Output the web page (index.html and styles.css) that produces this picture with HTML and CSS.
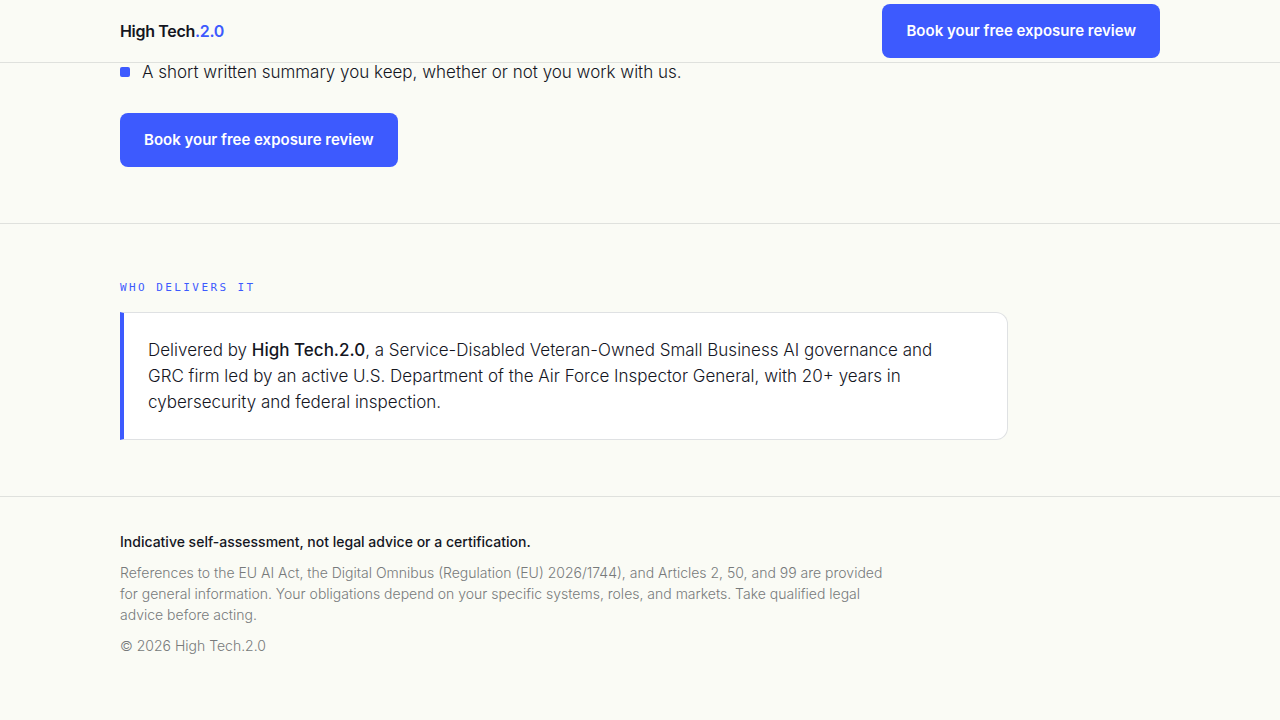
FILE: index.html
```html
<!DOCTYPE html>
<html lang="en">
<head>
<meta charset="UTF-8">
<meta name="viewport" content="width=device-width, initial-scale=1">
<title>High Tech.2.0</title>
<link rel="stylesheet" href="styles.css">
</head>
<body>

<header class="site-header">
  <div class="wrap header-row">
    <a class="brand" href="#">High Tech<span>.2.0</span></a>
    <a class="btn" href="#book">Book your free exposure review</a>
  </div>
</header>

<main>
  <section class="offer" id="book">
    <div class="wrap">
      <ul class="checks">
        <li>A short written summary you keep, whether or not you work with us.</li>
      </ul>
      <a class="btn" href="#book">Book your free exposure review</a>
    </div>
  </section>

  <section class="who">
    <div class="wrap">
      <h2 class="eyebrow">Who delivers it</h2>
      <p class="card">
        Delivered by <strong>High Tech.2.0</strong>, a Service-Disabled Veteran-Owned Small Business AI governance and GRC firm led by an active U.S. Department of the Air Force Inspector General, with 20+ years in cybersecurity and federal inspection.
      </p>
    </div>
  </section>
</main>

<footer class="site-footer">
  <div class="wrap">
    <p class="notice">Indicative self-assessment, not legal advice or a certification.</p>
    <p>References to the EU AI Act, the Digital Omnibus (Regulation (EU) 2026/1744), and Articles 2, 50, and 99 are provided for general information. Your obligations depend on your specific systems, roles, and markets. Take qualified legal advice before acting.</p>
    <p>© 2026 High Tech.2.0</p>
  </div>
</footer>

</body>
</html>
```
FILE: styles.css
```css
* {
  box-sizing: border-box;
}

body {
  margin: 0;
  background: #fafbf5;
  color: #14161f;
  font-family: Inter, "Liberation Sans", sans-serif;
  font-size: 17px;
  font-weight: 300;
  line-height: 26px;
}

.wrap {
  max-width: 1088px;
  margin: 0 auto;
  padding: 0 24px;
}

/* header stays over the page while it scrolls */
.site-header {
  position: fixed;
  top: 0;
  left: 0;
  right: 0;
  z-index: 10;
  background: #fafbf5;
  border-bottom: 1px solid #dfe1dd;
}

.header-row {
  display: flex;
  align-items: center;
  justify-content: space-between;
  padding-top: 4px;
  padding-bottom: 4px;
}

.brand {
  color: #14161f;
  font-size: 16px;
  font-weight: 600;
  letter-spacing: -0.02em;
  text-decoration: none;
}

.brand span {
  color: #3d5afe;
}

.btn {
  display: inline-block;
  padding: 14px 24px;
  border-radius: 8px;
  background: #3d5afe;
  color: #fff;
  font-size: 15px;
  font-weight: 600;
  text-decoration: none;
}

.offer {
  padding: 59px 0 56px;
  border-bottom: 1px solid #dfe1dd;
}

.offer .btn {
  display: block;
  width: fit-content;
}

.checks {
  list-style: none;
  margin: 0 0 28px;
  padding: 0;
}

.checks li {
  display: flex;
  align-items: center;
  gap: 12px;
}

.checks li::before {
  content: "";
  flex: none;
  width: 10px;
  height: 10px;
  border-radius: 2px;
  background: #3d5afe;
}

.who {
  padding: 56px 0;
  border-bottom: 1px solid #dfe1dd;
}

.eyebrow {
  margin: 0 0 16px;
  color: #3d5afe;
  font-family: "DejaVu Sans Mono", monospace;
  font-size: 11px;
  font-weight: 400;
  line-height: 16px;
  letter-spacing: 0.22em;
  text-transform: uppercase;
}

.card {
  max-width: 888px;
  margin: 0;
  padding: 24px 40px 24px 24px;
  background: #fff;
  border: 1px solid #dfe1e3;
  border-left: 4px solid #3d5afe;
  border-radius: 0 12px 12px 0;
}

.card strong {
  font-weight: 500;
}

.site-footer {
  padding: 34px 0 64px;
  color: #777a7b;
  font-size: 14px;
  line-height: 21px;
}

.site-footer p {
  max-width: 776px;
  margin: 0 0 10px;
}

.site-footer .notice {
  color: #14161f;
  font-weight: 500;
}
```
